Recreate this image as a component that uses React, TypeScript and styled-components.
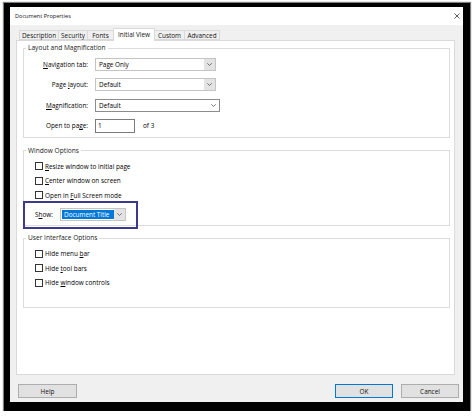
import React from "react";
import styled, { createGlobalStyle } from "styled-components";

const Global = createGlobalStyle`
  html, body { margin: 0; padding: 0; background: #fff; }
  body { font-family: "Open Sans", "Noto Sans", sans-serif; font-size: 6.4px; color: #000; }
  * { box-sizing: border-box; }
`;

const Frame = styled.div`
  margin: 3px 0 0 4px;
  width: 466px;
  height: 408px;
  background: #000;
  padding: 4px 7px 9px 6px;
  display: flex;
  box-shadow: 0 0 1px 1px rgba(0, 0, 0, 0.5);
`;

const Dialog = styled.div`
  flex: 1;
  display: flex;
  flex-direction: column;
  background: #f0f0f0;
`;

const TitleBar = styled.div`
  height: 18px;
  flex: none;
  background: #fff;
  display: flex;
  align-items: center;
  justify-content: space-between;
  padding: 0 3px 0 5px;
  font-size: 5.6px;
  color: #111;
`;

const TabStrip = styled.div`
  height: 15px;
  flex: none;
  display: flex;
  align-items: flex-end;
  padding-left: 10px;
  position: relative;
  z-index: 2;
`;

const Tab = styled.div<{ $w: number; $active?: boolean }>`
  width: ${(p) => p.$w}px;
  height: ${(p) => (p.$active ? 13 : 10)}px;
  margin-bottom: ${(p) => (p.$active ? -1 : 0)}px;
  margin-left: -1px;
  border: 1px solid #d9d9d9;
  border-bottom: ${(p) => (p.$active ? "none" : "1px solid #d9d9d9")};
  background: ${(p) => (p.$active ? "#fff" : "#f0f0f0")};
  display: flex;
  align-items: center;
  justify-content: center;
  white-space: nowrap;
  padding-bottom: ${(p) => (p.$active ? 2 : 0)}px;
  color: #111;
`;

const Panel = styled.div`
  height: 335px;
  flex: none;
  margin: 0 8px 0 6px;
  background: #fff;
  border: 1px solid #d9d9d9;
  padding: 2px 4px 0 6px;
  position: relative;
  z-index: 1;
`;

const Group = styled.fieldset<{ $mt?: number }>`
  margin: ${(p) => p.$mt ?? 0}px 0 0 0;
  padding: 0;
  border: 1px solid #dcdcdc;
  min-width: 0;
`;

const Legend = styled.legend`
  font-size: 6.6px;
  line-height: 10px;
  padding: 0 2px;
  margin-left: 2px;
  color: #222;
`;

const FormGrid = styled.div`
  display: grid;
  grid-template-columns: 64px auto;
  column-gap: 7px;
  row-gap: 7.3px;
  align-items: center;
  padding: 5px 0 4px 0;
`;

const FieldLabel = styled.div`
  text-align: right;
  white-space: nowrap;
`;

const U = styled.span`
  text-decoration: underline;
  text-underline-offset: 1px;
`;

const Combo = styled.div<{ $w: number; $dark?: boolean }>`
  width: ${(p) => p.$w}px;
  height: 13px;
  border: 1px solid ${(p) => (p.$dark ? "#8c8c8c" : "#c4c4c4")};
  background: #fff;
  display: flex;
  align-items: stretch;
`;

const ComboText = styled.div`
  flex: 1;
  display: flex;
  align-items: center;
  padding-left: 3px;
  white-space: nowrap;
`;

const DropBtn = styled.div<{ $grey?: boolean }>`
  width: 11px;
  flex: none;
  display: flex;
  align-items: center;
  justify-content: center;
  background: ${(p) => (p.$grey ? "#e3e3e3" : "#fff")};
`;

const InlineRow = styled.div`
  display: flex;
  align-items: center;
`;

const TextBox = styled.div`
  width: 40px;
  height: 14px;
  border: 1px solid #7a7a7a;
  background: #fff;
  display: flex;
  align-items: center;
  padding-left: 2px;
`;

const OfText = styled.span`
  margin-left: 8px;
`;

const GroupBody = styled.div<{ $pb: number }>`
  padding: 3px 0 ${(p) => p.$pb}px 11px;
`;

const CheckRow = styled.div`
  height: 14.5px;
  display: flex;
  align-items: center;
  gap: 2px;
  white-space: nowrap;
`;

const Box = styled.span`
  width: 8px;
  height: 8px;
  border: 1px solid #333;
  background: #fff;
  flex: none;
`;

const ShowRow = styled.div`
  margin-top: 6px;
  height: 13px;
  display: flex;
  align-items: center;
  position: relative;
`;

const ShowLabel = styled.span`
  width: 25px;
  flex: none;
`;

const Highlight = styled.div`
  flex: 1;
  margin: 1px 0 1px 1px;
  background: #0078d7;
  color: #fff;
  display: flex;
  align-items: center;
  padding-left: 2px;
  white-space: nowrap;
`;

const Annotation = styled.div`
  position: absolute;
  left: -12px;
  top: -7px;
  width: 115px;
  height: 28px;
  border: 2px solid #3d3a8c;
  pointer-events: none;
`;

const ButtonRow = styled.div`
  margin-top: 9px;
  height: 14px;
  flex: none;
  display: flex;
  padding: 0 4px 0 8px;
  gap: 8px;
`;

const Spacer = styled.div`
  flex: 1;
`;

const Button = styled.div<{ $w: number; $default?: boolean }>`
  width: ${(p) => p.$w}px;
  height: 14px;
  background: #e1e1e1;
  border: 1px solid ${(p) => (p.$default ? "#0078d7" : "#adadad")};
  display: flex;
  align-items: center;
  justify-content: center;
  color: #111;
`;

const Chevron = () => (
  <svg width="5" height="3" viewBox="0 0 5 3">
    <path d="M0.3 0.3 L2.5 2.5 L4.7 0.3" fill="none" stroke="#555" strokeWidth="0.8" />
  </svg>
);

const CloseX = () => (
  <svg width="6" height="6" viewBox="0 0 6 6">
    <path d="M0.5 0.5 L5.5 5.5 M5.5 0.5 L0.5 5.5" stroke="#333" strokeWidth="0.8" />
  </svg>
);

const Check = ({ children }: { children: React.ReactNode }) => (
  <CheckRow>
    <Box />
    <span>{children}</span>
  </CheckRow>
);

const tabs: { label: string; w: number; active?: boolean }[] = [
  { label: "Description", w: 40 },
  { label: "Security", w: 30 },
  { label: "Fonts", w: 27 },
  { label: "Initial View", w: 42, active: true },
  { label: "Custom", w: 31 },
  { label: "Advanced", w: 36 },
];

export default function App() {
  return (
    <>
      <Global />
      <Frame>
        <Dialog>
          <TitleBar>
            <span>Document Properties</span>
            <CloseX />
          </TitleBar>
          <TabStrip>
            {tabs.map((t) => (
              <Tab key={t.label} $w={t.w} $active={t.active}>
                {t.label}
              </Tab>
            ))}
          </TabStrip>
          <Panel>
            <Group>
              <Legend>Layout and Magnification</Legend>
              <FormGrid>
                <FieldLabel>
                  <U>N</U>avigation tab:
                </FieldLabel>
                <Combo $w={121}>
                  <ComboText>Page Only</ComboText>
                  <DropBtn $grey>
                    <Chevron />
                  </DropBtn>
                </Combo>
                <FieldLabel>
                  Page <U>l</U>ayout:
                </FieldLabel>
                <Combo $w={121}>
                  <ComboText>Default</ComboText>
                  <DropBtn $grey>
                    <Chevron />
                  </DropBtn>
                </Combo>
                <FieldLabel>
                  <U>M</U>agnification:
                </FieldLabel>
                <Combo $w={125} $dark>
                  <ComboText>Default</ComboText>
                  <DropBtn>
                    <Chevron />
                  </DropBtn>
                </Combo>
                <FieldLabel>
                  Open to pa<U>g</U>e:
                </FieldLabel>
                <InlineRow>
                  <TextBox>1</TextBox>
                  <OfText>of 3</OfText>
                </InlineRow>
              </FormGrid>
            </Group>
            <Group $mt={8}>
              <Legend>Window Options</Legend>
              <GroupBody $pb={4}>
                <Check>
                  <U>R</U>esize window to initial page
                </Check>
                <Check>
                  <U>C</U>enter window on screen
                </Check>
                <Check>
                  Open in <U>F</U>ull Screen mode
                </Check>
                <ShowRow>
                  <ShowLabel>
                    S<U>h</U>ow:
                  </ShowLabel>
                  <Combo $w={66}>
                    <Highlight>Document Title</Highlight>
                    <DropBtn $grey>
                      <Chevron />
                    </DropBtn>
                  </Combo>
                  <Annotation />
                </ShowRow>
              </GroupBody>
            </Group>
            <Group $mt={7}>
              <Legend>User Interface Options</Legend>
              <GroupBody $pb={17}>
                <Check>
                  Hide menu <U>b</U>ar
                </Check>
                <Check>
                  Hide <U>t</U>ool bars
                </Check>
                <Check>
                  Hide <U>w</U>indow controls
                </Check>
              </GroupBody>
            </Group>
          </Panel>
          <ButtonRow>
            <Button $w={59}>Help</Button>
            <Spacer />
            <Button $w={58} $default>
              OK
            </Button>
            <Button $w={58}>Cancel</Button>
          </ButtonRow>
        </Dialog>
      </Frame>
    </>
  );
}
